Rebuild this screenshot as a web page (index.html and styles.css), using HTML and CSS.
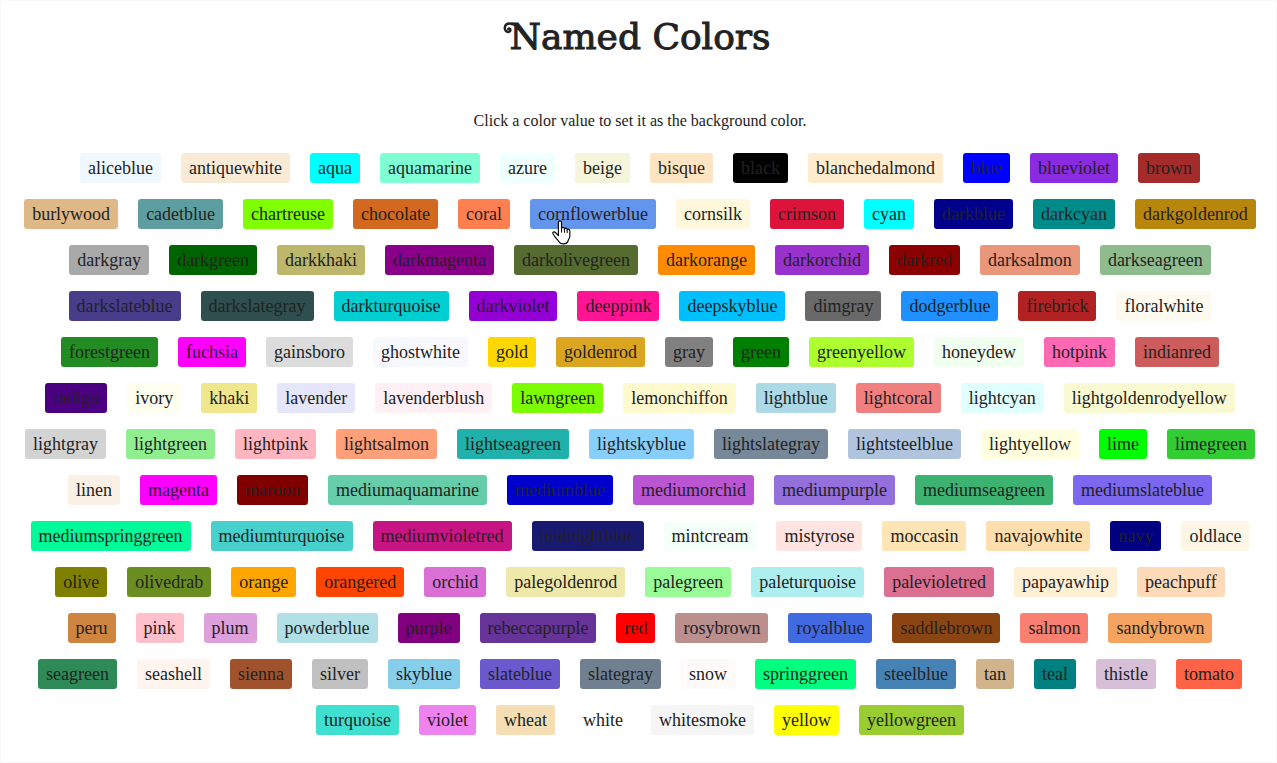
FILE: index.html
```html
<!DOCTYPE html>
<html lang="en">
<head>
<meta charset="utf-8">
<title>Named Colors</title>
<link rel="stylesheet" href="styles.css">
</head>
<body>
<main class="page">
  <h1 class="title"><span class="title-text">Named Colors<svg class="flourish" viewBox="0 0 14 16" width="14" height="16" aria-hidden="true"><path d="M13 4C10 1 2.500 0 1.800 5.500C1.500 10 7 11.500 7.500 8C7.500 6.500 6 6 5.300 7" fill="none" stroke="#222" stroke-width="2.400" stroke-linecap="round"/></svg></span></h1>
  <p class="hint">Click a color value to set it as the background color.</p>
  <div class="swatches" id="swatches"></div>
</main>
<template id="pointer">
  <svg class="pointer" viewBox="0 0 18 24" width="19" height="25" aria-hidden="true">
    <path d="M6 15V2.500C6 .3 9 .3 9 2.500V8C9.500 6.600 11.800 6.800 11.800 8.500C12.500 7.300 14.400 7.700 14.400 9.300C15.100 8.300 17 8.700 17 10.500V15C17 18 15 19 15 21C13.500 23.500 8.500 23.500 7 21.500C6 19 3 17.500 1 13.500C0 11.500 2 10.800 3.200 12Z" fill="#fff" stroke="#000" stroke-width="1.100" stroke-linejoin="round"/>
    <path d="M9 8v4M11.800 8.500v3.800M14.400 9.500v3" fill="none" stroke="#000" stroke-width="1"/>
  </svg>
</template>
<script src="script.js"></script>
</body>
</html>
```
FILE: styles.css
```css
* { box-sizing: border-box; }

body {
  margin: 0;
  min-height: 100vh;
  border: 1px solid #f9f9f9;
  background: #fff;
  color: #222;
  font-family: "Liberation Serif", "Times New Roman", serif;
}

.page {
  padding: 12px 20px 26px 23px;
  text-align: center;
}

.title {
  margin: 0;
  font-family: "DejaVu Serif", serif;
  font-size: 36px;
  font-weight: 400;
  line-height: 48px;
  -webkit-text-stroke: 1px #222;
}

.title-text {
  position: relative;
}

.flourish {
  position: absolute;
  left: -7px;
  top: 6px;
}

.hint {
  margin: 48px 0 20px;
  font-size: 16px;
  line-height: 24px;
}

.swatches {
  display: flex;
  flex-wrap: wrap;
  justify-content: center;
  gap: 16px 20px;
}

.swatch {
  position: relative;
  height: 30px;
  padding: 0 8px;
  border: 0;
  border-radius: 3px;
  color: #222;
  font-family: inherit;
  font-size: 18px;
  line-height: 30px;
  cursor: pointer;
}

.pointer {
  position: absolute;
  left: 22px;
  top: 21px;
  z-index: 1;
  pointer-events: none;
}
```
FILE: script.js
```js
const colors = `aliceblue antiquewhite aqua aquamarine azure beige bisque black blanchedalmond blue blueviolet brown
burlywood cadetblue chartreuse chocolate coral cornflowerblue cornsilk crimson cyan darkblue darkcyan darkgoldenrod
darkgray darkgreen darkkhaki darkmagenta darkolivegreen darkorange darkorchid darkred darksalmon darkseagreen
darkslateblue darkslategray darkturquoise darkviolet deeppink deepskyblue dimgray dodgerblue firebrick floralwhite
forestgreen fuchsia gainsboro ghostwhite gold goldenrod gray green greenyellow honeydew hotpink indianred
indigo ivory khaki lavender lavenderblush lawngreen lemonchiffon lightblue lightcoral lightcyan lightgoldenrodyellow
lightgray lightgreen lightpink lightsalmon lightseagreen lightskyblue lightslategray lightsteelblue lightyellow lime limegreen
linen magenta maroon mediumaquamarine mediumblue mediumorchid mediumpurple mediumseagreen mediumslateblue
mediumspringgreen mediumturquoise mediumvioletred midnightblue mintcream mistyrose moccasin navajowhite navy oldlace
olive olivedrab orange orangered orchid palegoldenrod palegreen paleturquoise palevioletred papayawhip peachpuff
peru pink plum powderblue purple rebeccapurple red rosybrown royalblue saddlebrown salmon sandybrown
seagreen seashell sienna silver skyblue slateblue slategray snow springgreen steelblue tan teal thistle tomato
turquoise violet wheat white whitesmoke yellow yellowgreen`.split(/\s+/);

const list = document.getElementById("swatches");

for (const name of colors) {
  const button = document.createElement("button");
  button.type = "button";
  button.className = "swatch";
  button.style.backgroundColor = name;
  button.textContent = name;
  button.addEventListener("click", () => {
    document.body.style.backgroundColor = name;
  });
  if (name === "cornflowerblue") {
    button.append(document.getElementById("pointer").content.cloneNode(true));
  }
  list.append(button);
}
```
